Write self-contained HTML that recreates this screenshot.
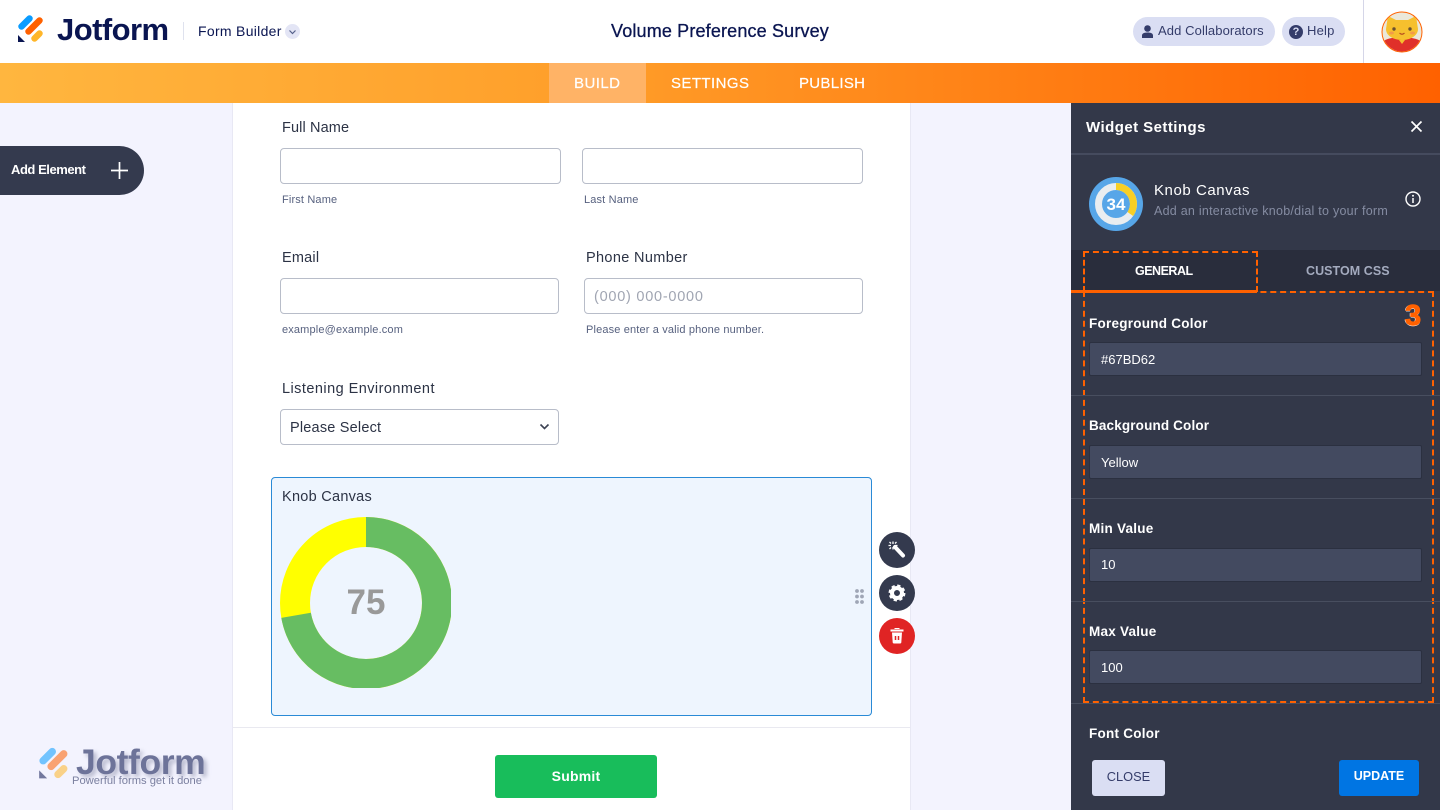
<!DOCTYPE html>
<html><head><meta charset="utf-8"><style>
*{box-sizing:border-box}
html,body{margin:0;padding:0;width:1440px;height:810px;overflow:hidden;background:#f3f3fe;font-family:"Liberation Sans",sans-serif}
.a{position:absolute;white-space:nowrap}
.lbl{font-size:14.5px;color:#2c3345;letter-spacing:.2px;line-height:18px}
.sub{font-size:11px;color:#57617f;letter-spacing:.15px;line-height:14px}
.inp{position:absolute;background:#fff;border:1px solid #b8bdc9;border-radius:4px;height:36px}
.wl{font-size:13.5px;font-weight:bold;color:#fff;letter-spacing:.25px;line-height:16px}
.wi{position:absolute;left:1089px;width:333px;height:34px;background:#434a60;border:1px solid #2b3040;border-radius:2px;color:#fff;font-size:13px;line-height:33px;padding-left:11px}
.sep{position:absolute;left:1071px;width:369px;height:1px;background:#484e5f}
.nav{font-size:15px;color:#fff;line-height:20px;-webkit-text-stroke:.2px #fff}
</style></head><body>
<!-- header -->
<div class="a" style="left:0;top:0;width:1440px;height:63px;background:#fff"></div>
<svg class="a" style="left:17px;top:14px" width="28" height="29" viewBox="0 0 28 29">
<g fill="none" stroke-linecap="round" stroke-width="6.500">
<path d="M4.500 12.500L12.500 4.500" stroke="#0a9cff"/>
<path d="M11.500 17.500L22.500 6.500" stroke="#ff6100"/>
<path d="M17.500 24.500L22.500 19.500" stroke="#ffb629"/></g>
<path d="M1 21L1 28L8 28Z" fill="#0a1551"/>
</svg>
<div class="a" style="left:57px;top:11px;font-size:31px;font-weight:bold;color:#0a1551;letter-spacing:-.55px;line-height:38px">Jotform</div>
<div class="a" style="left:183px;top:22px;width:1px;height:18px;background:#dfe2ee"></div>
<div class="a" style="left:198px;top:22px;font-size:14px;color:#0a1551;letter-spacing:.3px;line-height:18px">Form Builder</div>
<div class="a" style="left:285px;top:24px;width:15px;height:15px;border-radius:50%;background:#e3e5f5"></div>
<svg class="a" style="left:285px;top:24px" width="15" height="15"><path d="M4.500 6.500L7.500 9.500L10.500 6.500" fill="none" stroke="#55608a" stroke-width="1.200"/></svg>
<div class="a" style="left:611px;top:20px;width:218px;text-align:center;font-size:18px;color:#0a1551;letter-spacing:.16px;line-height:22px;-webkit-text-stroke:.3px #0a1551">Volume Preference Survey</div>
<div class="a" style="left:1133px;top:17px;width:142px;height:29px;border-radius:15px;background:#dadef3"></div>
<svg class="a" style="left:1141px;top:25px" width="13" height="14" viewBox="0 0 13 14"><circle cx="6.500" cy="3.500" r="3.300" fill="#343c6a"/><path d="M1 13V10.500C1 8.500 3 7.500 6.500 7.500S12 8.500 12 10.500V13Z" fill="#343c6a"/></svg>
<div class="a" style="left:1158px;top:23px;font-size:13px;color:#343c6a;letter-spacing:.1px;line-height:16px">Add Collaborators</div>
<div class="a" style="left:1282px;top:17px;width:63px;height:29px;border-radius:15px;background:#dadef3"></div>
<div class="a" style="left:1289px;top:25px;width:14px;height:14px;border-radius:50%;background:#343c6a;color:#dadef3;font-size:11px;font-weight:bold;text-align:center;line-height:14px">?</div>
<div class="a" style="left:1307px;top:23px;font-size:13px;color:#343c6a;line-height:16px;letter-spacing:.2px">Help</div>
<div class="a" style="left:1363px;top:0;width:1px;height:63px;background:#d5d6e8"></div>
<svg class="a" style="left:1381px;top:11px" width="42" height="42" viewBox="0 0 42 42">
<defs><clipPath id="c"><circle cx="21" cy="21" r="19.500"/></clipPath></defs>
<circle cx="21" cy="21" r="20" fill="#ebe8da" stroke="#ff6100" stroke-width="1"/>
<g clip-path="url(#c)"><path d="M3 42V30C8 25 34 25 39 30V42Z" fill="#e0302a"/>
<path d="M7 5L15 9H27L35 5L37 18C37 25 29 29 21 29S5 25 5 18Z" fill="#f6c02e"/>
<circle cx="13" cy="18" r="1.700" fill="#6b5130"/><circle cx="29" cy="18" r="1.700" fill="#6b5130"/>
<ellipse cx="10.500" cy="22" rx="2.500" ry="1.500" fill="#f29a4a"/><ellipse cx="31.500" cy="22" rx="2.500" ry="1.500" fill="#f29a4a"/>
<path d="M18.500 22Q21 24.500 23.500 22" fill="none" stroke="#b5491f" stroke-width="1.200"/>
<path d="M18 29L21 33L24 29Z" fill="#f6c02e"/></g></svg>
<!-- orange nav -->
<div class="a" style="left:0;top:63px;width:1440px;height:40px;background:linear-gradient(90deg,#ffb63f 0%,#ff9f2a 40%,#ff6100 100%)"></div>
<div class="a" style="left:549px;top:63px;width:97px;height:40px;background:#ffb366"></div>
<div class="a nav" style="left:574px;top:74px;letter-spacing:.45px">BUILD</div>
<div class="a nav" style="left:671px;top:74px;letter-spacing:.42px">SETTINGS</div>
<div class="a nav" style="left:799px;top:74px;letter-spacing:.3px">PUBLISH</div>
<!-- form page -->
<div class="a" style="left:232px;top:103px;width:679px;height:707px;background:#fff;border-left:1px solid #e8e8f4;border-right:1px solid #e8e8f4"></div>
<div class="a lbl" style="left:282px;top:119px;letter-spacing:.12px">Full Name</div>
<div class="inp" style="left:280px;top:148px;width:281px"></div>
<div class="inp" style="left:582px;top:148px;width:281px"></div>
<div class="a sub" style="left:282px;top:193px">First Name</div>
<div class="a sub" style="left:584px;top:193px">Last Name</div>
<div class="a lbl" style="left:282px;top:249px">Email</div>
<div class="a lbl" style="left:586px;top:249px;letter-spacing:.35px">Phone Number</div>
<div class="inp" style="left:280px;top:278px;width:279px"></div>
<div class="inp" style="left:584px;top:278px;width:279px;color:#a0a5b2;font-size:14.500px;line-height:36px;padding-left:9px;letter-spacing:.75px">(000) 000-0000</div>
<div class="a sub" style="left:282px;top:323px">example@example.com</div>
<div class="a sub" style="left:586px;top:323px">Please enter a valid phone number.</div>
<div class="a lbl" style="left:282px;top:380px;letter-spacing:.45px">Listening Environment</div>
<div class="inp" style="left:280px;top:409px;width:279px;color:#2c3345;font-size:14.500px;line-height:36px;padding-left:9px;letter-spacing:.2px">Please Select</div>
<svg class="a" style="left:538px;top:421px" width="14" height="12"><path d="M2.500 3.500L6.500 7.500L10.500 3.500" fill="none" stroke="#3c4353" stroke-width="1.600"/></svg>
<!-- widget -->
<div class="a" style="left:271px;top:477px;width:601px;height:239px;background:#eef5fe;border:1px solid #2a8ad6;border-radius:4px"></div>
<div class="a lbl" style="left:282px;top:488px;letter-spacing:.27px">Knob Canvas</div>
<svg class="a" style="left:280px;top:517px" width="171" height="171" viewBox="0 0 171 171">
<circle cx="86" cy="86" r="71" fill="none" stroke="#ffff00" stroke-width="30"/>
<path d="M86 15A71 71 0 1 1 16.080 98.330" fill="none" stroke="#67bd62" stroke-width="30"/>
<text x="86" y="97" text-anchor="middle" font-family="Liberation Sans" font-weight="bold" font-size="35" fill="#999">75</text>
</svg>
<svg class="a" style="left:854px;top:589px" width="11" height="17"><g fill="#9fa6b6"><circle cx="3" cy="2" r="1.900"/><circle cx="8" cy="2" r="1.900"/><circle cx="3" cy="7.500" r="1.900"/><circle cx="8" cy="7.500" r="1.900"/><circle cx="3" cy="13" r="1.900"/><circle cx="8" cy="13" r="1.900"/></g></svg>
<!-- floating buttons -->
<div class="a" style="left:879px;top:532px;width:36px;height:36px;border-radius:50%;background:#343a4e"></div>
<svg class="a" style="left:879px;top:532px" width="36" height="36"><path d="M16 15L24 23.500" stroke="#fff" stroke-width="4" stroke-linecap="round"/><g stroke="#fff" stroke-width="1.300"><path d="M14 9.500V12M14 15V17.500M9.500 13.500H12M16 13.500H18.500M10.500 10L12 11.500M17.500 10L16 11.500M10.500 17L12 15.500"/></g></svg>
<div class="a" style="left:879px;top:575px;width:36px;height:36px;border-radius:50%;background:#343a4e"></div>
<svg class="a" style="left:879px;top:575px" width="36" height="36"><circle cx="18" cy="18" r="5" fill="none" stroke="#fff" stroke-width="4"/><circle cx="18" cy="18" r="7.200" fill="none" stroke="#fff" stroke-width="2.500" stroke-dasharray="3.200 2.450"/></svg>
<div class="a" style="left:879px;top:618px;width:36px;height:36px;border-radius:50%;background:#e02424"></div>
<svg class="a" style="left:879px;top:618px" width="36" height="36"><path d="M11.500 11.500H24.500V13.500H11.500ZM15.500 11V10H20.500V11Z" fill="#fff"/><path d="M13 14.500H23L22.300 24.500Q22.200 25.500 21 25.500H15Q13.800 25.500 13.700 24.500Z" fill="#fff"/><path d="M16.500 18V22M19.500 18V22" stroke="#e02424" stroke-width="1.500"/></svg>
<!-- submit -->
<div class="a" style="left:233px;top:727px;width:677px;height:1px;background:#e9e9f0"></div>
<div class="a" style="left:495px;top:755px;width:162px;height:43px;background:#18bd5b;border-radius:3px;color:#fff;font-size:14px;font-weight:bold;text-align:center;line-height:42px;letter-spacing:.2px">Submit</div>
<!-- add element -->
<div class="a" style="left:0;top:146px;width:144px;height:49px;background:#343a4e;border-radius:0 25px 25px 0"></div>
<div class="a" style="left:11px;top:162px;font-size:13px;font-weight:bold;color:#fff;line-height:16px;letter-spacing:-.45px">Add Element</div>
<svg class="a" style="left:110px;top:161px" width="19" height="19"><path d="M9.500 1V18M1 9.500H18" stroke="#fff" stroke-width="1.700"/></svg>
<!-- watermark -->
<svg class="a" style="left:38px;top:746px;opacity:.55" width="32" height="34" viewBox="0 0 28 29">
<g fill="none" stroke-linecap="round" stroke-width="6.500"><path d="M4.500 12.500L12.500 4.500" stroke="#0a9cff"/><path d="M11.500 17.500L22.500 6.500" stroke="#ff6100"/><path d="M17.500 24.500L22.500 19.500" stroke="#ffb629"/></g><path d="M1 21L1 28L8 28Z" fill="#0a1551"/></svg>
<div class="a" style="left:76px;top:742px;font-size:35.500px;font-weight:bold;color:#6d7399;letter-spacing:-.4px;line-height:40px;text-shadow:3px 3px 4px rgba(90,95,130,.4)">Jotform</div>
<div class="a" style="left:72px;top:775px;font-size:11.200px;color:#7b80a0;line-height:13px">Powerful forms get it done</div>
<!-- right panel -->
<div class="a" style="left:1071px;top:103px;width:369px;height:707px;background:#333849"></div>
<div class="a" style="left:1086px;top:119px;font-size:15px;font-weight:bold;color:#fff;letter-spacing:.45px;line-height:18px">Widget Settings</div>
<svg class="a" style="left:1410px;top:120px" width="13" height="13"><path d="M1.500 1.500L11.500 11.500M11.500 1.500L1.500 11.500" stroke="#fff" stroke-width="1.700"/></svg>
<div class="a" style="left:1071px;top:153px;width:369px;height:2px;background:#454b5e"></div>
<svg class="a" style="left:1089px;top:177px" width="54" height="54" viewBox="0 0 54 54">
<circle cx="27" cy="27" r="27" fill="#57a6e8"/>
<circle cx="27" cy="27" r="17.500" fill="none" stroke="#e9edf0" stroke-width="7"/>
<path d="M27 9.500A17.500 17.500 0 0 1 41.300 37" fill="none" stroke="#f8cf25" stroke-width="7"/>
<text x="27" y="33" text-anchor="middle" font-family="Liberation Sans" font-weight="bold" font-size="17" fill="#fff">34</text></svg>
<div class="a" style="left:1154px;top:181px;font-size:15px;color:#fff;letter-spacing:.55px;line-height:19px">Knob Canvas</div>
<div class="a" style="left:1154px;top:204px;font-size:12.500px;color:#858ca2;letter-spacing:.25px;line-height:15px">Add an interactive knob/dial to your form</div>
<svg class="a" style="left:1405px;top:191px" width="16" height="16"><circle cx="8" cy="8" r="7" fill="none" stroke="#fff" stroke-width="1.400"/><path d="M8 7V12" stroke="#fff" stroke-width="1.500"/><circle cx="8" cy="4.800" r="1" fill="#fff"/></svg>
<!-- tabs -->
<div class="a" style="left:1071px;top:250px;width:369px;height:41px;background:#292d3c"></div>
<div class="a" style="left:1071px;top:290px;width:186px;height:3px;background:#ff6100"></div>
<div class="a" style="left:1083px;top:251px;width:175px;height:41px;border:2px dashed #ff6100;border-bottom:0"></div>
<div class="a" style="left:1135px;top:264px;font-size:12.500px;font-weight:bold;color:#fff;line-height:15px;letter-spacing:-.5px">GENERAL</div>
<div class="a" style="left:1306px;top:264px;font-size:12.500px;font-weight:bold;color:#a4abbf;line-height:15px;letter-spacing:.05px">CUSTOM CSS</div>
<div class="a" style="left:1083px;top:291px;width:351px;height:412px;border:2px dashed #ff6100"></div>
<div class="a" style="left:1071px;top:291px;width:14px;height:2px;background:#ff6100"></div>
<div class="a" style="left:1405px;top:299px;font-size:29px;font-weight:bold;color:#ff6100;line-height:34px;-webkit-text-stroke:1px #ff6100;text-shadow:-1px 0 #fff,0 1px #fff">3</div>
<!-- fields -->
<div class="a wl" style="left:1089px;top:316px">Foreground Color</div>
<div class="wi" style="top:342px">#67BD62</div>
<div class="sep" style="top:395px"></div>
<div class="a wl" style="left:1089px;top:418px;letter-spacing:.15px">Background Color</div>
<div class="wi" style="top:445px">Yellow</div>
<div class="sep" style="top:498px"></div>
<div class="a wl" style="left:1089px;top:521px">Min Value</div>
<div class="wi" style="top:548px;line-height:32px">10</div>
<div class="sep" style="top:601px"></div>
<div class="a wl" style="left:1089px;top:624px">Max Value</div>
<div class="wi" style="top:650px">100</div>
<div class="sep" style="top:703px"></div>
<div class="a wl" style="left:1089px;top:726px">Font Color</div>
<div class="a" style="left:1092px;top:760px;width:73px;height:36px;background:#dadef3;border-radius:3px;color:#343c6a;font-size:12.800px;text-align:center;line-height:33px">CLOSE</div>
<div class="a" style="left:1339px;top:760px;width:80px;height:36px;background:#0075e3;border-radius:3px;color:#fff;font-size:12.500px;font-weight:bold;text-align:center;line-height:33px">UPDATE</div>
</body></html>
